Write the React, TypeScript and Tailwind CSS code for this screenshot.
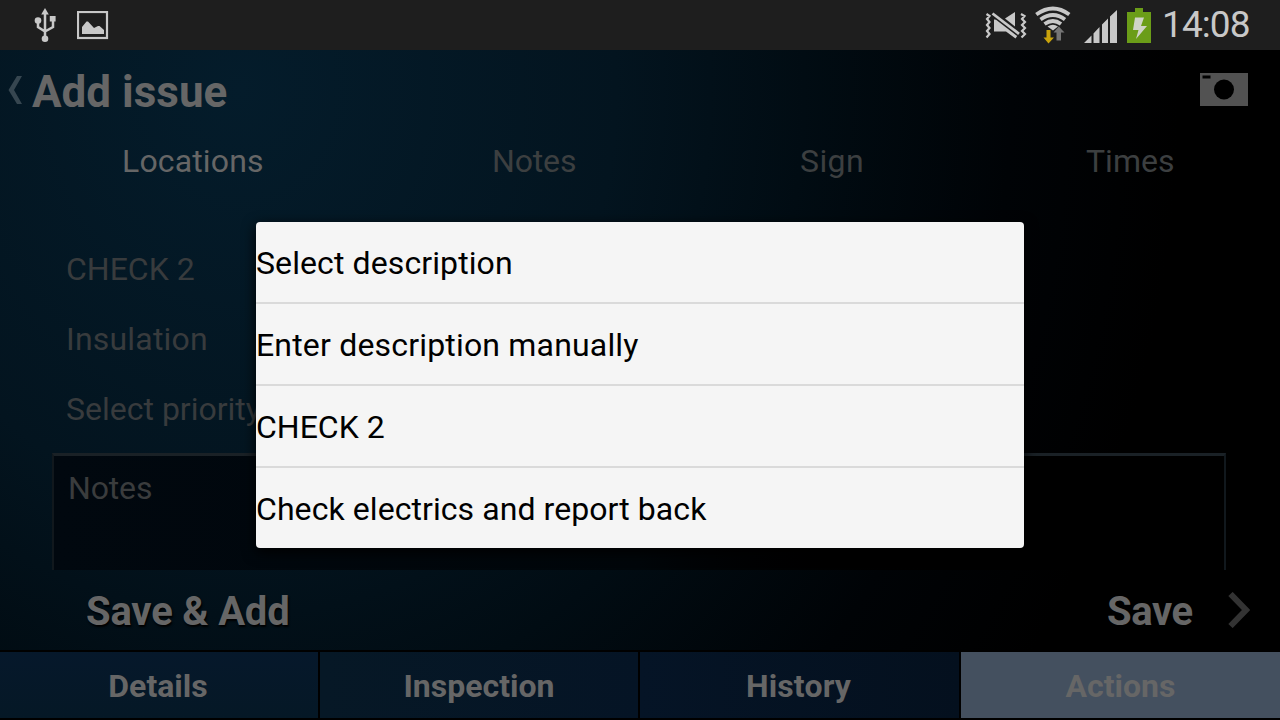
import React from "react";

const USB = () => (
  <svg width="24" height="36" viewBox="0 0 24 36" fill="#c8c8c8" stroke="none">
    <path d="M12 1L15.800 7.500H8.200Z" />
    <circle cx="5" cy="13.500" r="3.300" />
    <rect x="16.800" y="9" width="5.800" height="5.500" />
    <circle cx="12" cy="31.800" r="3.300" />
    <path d="M12 5V31M5 14V20L12 24.500M20 13V20L12 24.500" fill="none" stroke="#c8c8c8" strokeWidth="2.500" />
  </svg>
);

const Picture = () => (
  <svg width="32" height="29" viewBox="0 0 32 29">
    <rect x="1" y="1" width="29" height="26" fill="none" stroke="#c8c8c8" strokeWidth="2.200" />
    <path d="M5 23V16L9.500 10.500H11L17 17L21 15H22.500L27 19V23Z" fill="#c8c8c8" />
  </svg>
);

const Mute = () => (
  <svg width="42" height="28" viewBox="0 0 42 28">
    <path d="M1.500 2L4.500 4L2 7L4.500 10L2 13L4.500 16L2 19L4.500 22L1.500 25.500M36 2L39.500 4L37 7L40 10L37 13L40 16L37 19L40 22L36.500 25.500" fill="none" stroke="#c8c8c8" strokeWidth="2.200" />
    <path d="M9 7.500H12L32.500 23.500L30.500 26.500L21 19.500H9ZM20 6.500L30 0V14.500Z" fill="#c8c8c8" />
    <path d="M9 5L33 23.500" stroke="#1e1e1e" strokeWidth="1.800" />
    <path d="M7.500 1.500L34 21.800" stroke="#c8c8c8" strokeWidth="2.800" />
  </svg>
);

const Wifi = () => (
  <svg width="36" height="38" viewBox="0 0 36 38">
    <g fill="none" stroke="#c8c8c8" strokeWidth="3.800">
      <path d="M1.300 8.500Q18 -3.500 34.300 8.500" />
      <path d="M5.500 13.500Q18 4.500 30 13.500" />
      <path d="M9.500 18Q18 12 26 18" />
    </g>
    <path d="M12.500 20.500Q18 17 23 20.500L18 24.500Z" fill="#c8c8c8" />
    <path d="M11.500 24H15.500V31.500H19L13.500 37.500L8.500 31.500H11.500Z" fill="#c9a30c" />
    <path d="M21.500 34.500H26V26.500H29.500L23.800 20.500L18.500 26.500H21.500Z" fill="#757575" />
  </svg>
);

const Signal = () => (
  <svg width="33" height="33" viewBox="0 0 33 33" fill="#c8c8c8">
    <path d="M0 33L7.500 25.500V33ZM9.500 23.500L15.500 17V33H9.500ZM18 14.500L24 8.500V33H18ZM26 6.500L33 0V33H26Z" />
  </svg>
);

const Battery = () => (
  <svg width="24" height="35" viewBox="0 0 24 35">
    <path d="M0 4H8V0H16V4H24V35H0Z" fill="#6b9d18" />
    <path d="M8 9.500H17L14 18H20L9 31L11.500 22H6Z" fill="#d0d4c8" />
  </svg>
);

const StatusBar = () => (
  <header className="flex h-[50px] shrink-0 items-start bg-[#1e1e1e]">
    <div className="pt-[7px] pl-[33px]"><USB /></div>
    <div className="pt-[11px] pl-[20px]"><Picture /></div>
    <div className="ml-auto flex items-start pr-[30px]">
      <div className="pt-[12px]"><Mute /></div>
      <div className="ml-[8px] pt-[6px]"><Wifi /></div>
      <div className="ml-[13px] pt-[10px]"><Signal /></div>
      <div className="ml-[10px] pt-[8px]"><Battery /></div>
      <div className="ml-[11px] w-[88px] pt-[4px] text-[37px] leading-[42px] tracking-[-0.9px] whitespace-nowrap text-[#c8c8c8]">14:08</div>
    </div>
  </header>
);

const options = [
  { label: "Select description", tracking: "tracking-[0.1px]" },
  { label: "Enter description manually", tracking: "tracking-[0.18px]" },
  { label: "CHECK 2", tracking: "tracking-[0px]" },
  { label: "Check electrics and report back", tracking: "tracking-[0.07px]" },
];

export default function App() {
  return (
    <div className="relative flex h-[720px] w-[1280px] flex-col overflow-hidden bg-black font-['Roboto',sans-serif] text-[#666]">
      <StatusBar />
      <main className="flex min-h-0 flex-1 flex-col bg-[radial-gradient(ellipse_940px_1050px_at_240px_40px,#041c2b_0%,#03141f_40%,#010c13_60%,#000306_82%,#000_100%)]">
        <div className="flex h-[80px] shrink-0 items-start">
          <svg className="mt-[26px] ml-[8px]" width="15" height="28" viewBox="0 0 15 28">
            <path d="M9 0H14L6 14L14 28H9L0.500 14Z" fill="#364650" />
          </svg>
          <h1 className="mt-[16px] ml-[9px] text-[44px] leading-[52px] font-bold whitespace-nowrap">Add issue</h1>
          <svg className="mt-[23px] mr-[32px] ml-auto" width="48" height="33" viewBox="0 0 48 33">
            <rect width="48" height="33" fill="#525252" />
            <rect x="2.500" y="2.500" width="8" height="3" fill="#000" />
            <circle cx="24" cy="16.500" r="10" fill="#000" />
          </svg>
        </div>
        <nav className="flex h-[64px] shrink-0 pt-[12px] text-[32px] leading-[38px] whitespace-nowrap text-[#3c3f40]">
          <span className="ml-[122px] w-[370px] tracking-[0.15px] text-[#666]">Locations</span>
          <span className="w-[308px] tracking-[-0.15px]">Notes</span>
          <span className="w-[286px] tracking-[0.4px]">Sign</span>
          <span>Times</span>
        </nav>
        <div className="flex h-[259px] shrink-0 flex-col pt-[40px] pl-[66px] text-[32px] text-[#383b3d]">
          <div className="h-[70px] leading-[70px]">CHECK 2</div>
          <div className="h-[70px] leading-[70px] tracking-[0.2px]">Insulation</div>
          <div className="h-[70px] leading-[70px]">Select priority</div>
        </div>
        <div className="mr-[54px] ml-[52px] h-[117px] shrink-0 border-x-2 border-t-3 border-x-[#11181d] border-t-[#1a2126] bg-linear-to-r from-[#01080f] via-[#00060a] to-black to-80% pt-[13px] pl-[14px] text-[32px] leading-[38px] tracking-[-0.15px] text-[#3a3c3d]">
          Notes
        </div>
        <div className="flex h-[80px] shrink-0 items-start pl-[86px] text-[40px] leading-[48px] font-bold whitespace-nowrap">
          <span className="mt-[18px] tracking-[-0.2px] [text-shadow:1px_2px_2px_#000]">Save &amp; Add</span>
          <span className="mt-[18px] ml-auto w-[86px] tracking-[-0.4px] [text-shadow:1px_2px_2px_#000]">Save</span>
          <svg className="mt-[22px] mr-[30px] ml-[35px]" width="22" height="36" viewBox="0 0 22 36">
            <path d="M2.500 2L18 18L2.500 34" fill="none" stroke="#333" strokeWidth="6" />
          </svg>
        </div>
        <nav className="grid h-[70px] shrink-0 grid-cols-[318px_318px_319px_319px] gap-x-[2px] border-y-2 border-black bg-black text-center text-[32px] leading-[64px] font-bold">
          <span className="bg-linear-to-b from-[#06182b] to-[#051826] pt-[2px] pr-[2px]">Details</span>
          <span className="bg-linear-to-r from-[#061826] to-[#051425] pt-[2px]">Inspection</span>
          <span className="bg-linear-to-r from-[#051426] to-[#04101e] pt-[2px] pr-[2px] tracking-[0.15px]">History</span>
          <span className="bg-[#44505f] pt-[2px]">Actions</span>
        </nav>
      </main>
      <div role="dialog" className="absolute top-[222px] left-[256px] flex h-[326px] w-[768px] flex-col overflow-hidden rounded-[4px] bg-[#f5f5f5] text-[32px] text-black shadow-[0_4px_14px_#000]">
        {options.map((o) => (
          <div key={o.label} className={`h-[82px] shrink-0 border-b-2 border-[#dadada] leading-[82px] whitespace-nowrap last:border-0 ${o.tracking}`}>
            {o.label}
          </div>
        ))}
      </div>
    </div>
  );
}
